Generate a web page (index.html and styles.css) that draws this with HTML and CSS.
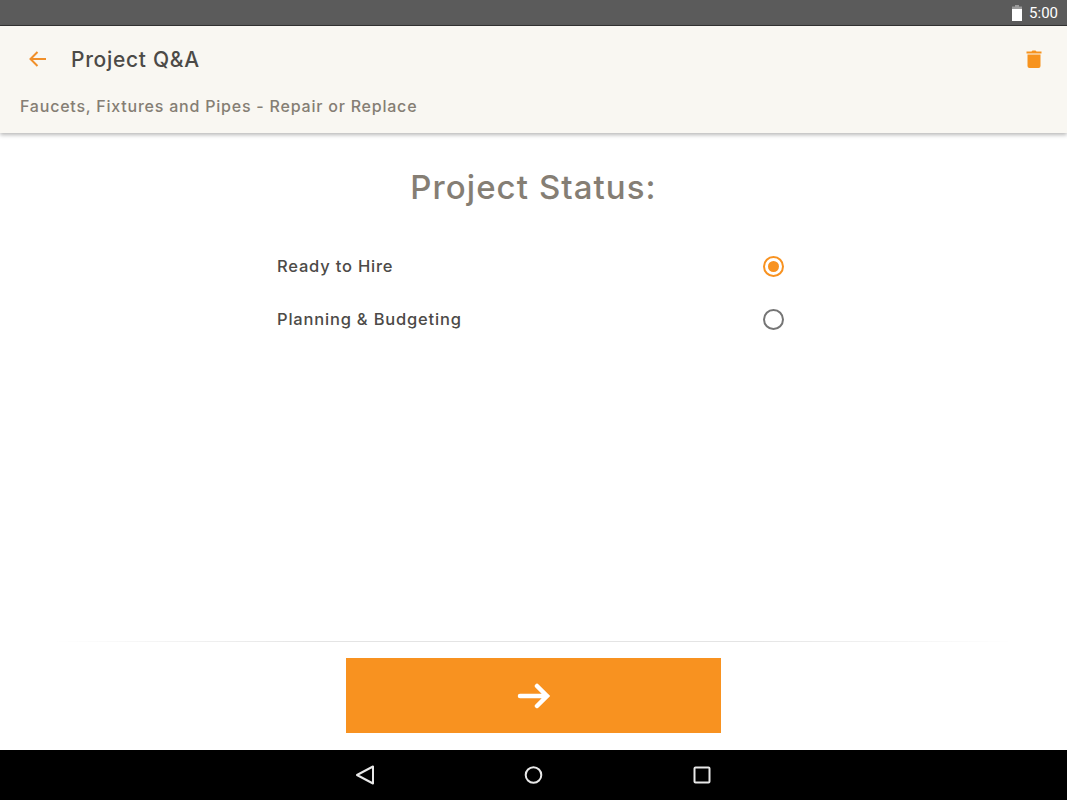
FILE: index.html
```html
<!DOCTYPE html>
<html lang="en">
<head>
    <meta charset="UTF-8">
    <meta name="viewport" content="width=device-width, initial-scale=1.0">
    <title>Project Q&amp;A</title>
    <link rel="stylesheet" href="styles.css">
</head>
<body>
    <div class="screen">
        <div class="status-bar">
            <svg class="battery" width="12" height="16" viewBox="0 0 12 16">
                <path d="M4 0h4v1.500h3v14.500h-10v-14.500h3z" fill="#9a9a9a"/>
                <path d="M1 4h10v12h-10z" fill="#fff"/>
            </svg>
            <span class="clock">5:00</span>
        </div>

        <header class="app-header">
            <div class="toolbar">
                <svg class="back-icon" width="20" height="18" viewBox="0 0 20 18">
                    <path d="M18 9H2.500M9.500 2L2.500 9l7 7" fill="none" stroke="#f08f2a" stroke-width="2"/>
                </svg>
                <h1>Project Q&amp;A</h1>
                <svg class="trash-icon" width="16" height="20" viewBox="0 0 16 20">
                    <path d="M0.500 2.500h5l1-1h3l1 1h5v2h-15z" fill="#f7931e"/>
                    <path d="M1.500 5.500h13v11.500a2 2 0 0 1-2 2h-9a2 2 0 0 1-2-2z" fill="#f7931e"/>
                </svg>
            </div>
            <p class="subtitle">Faucets, Fixtures and Pipes - Repair or Replace</p>
        </header>

        <main class="content">
            <h2>Project Status:</h2>
            <div class="options">
                <div class="option">
                    <span>Ready to Hire</span>
                    <span class="radio checked"></span>
                </div>
                <div class="option">
                    <span>Planning &amp; Budgeting</span>
                    <span class="radio"></span>
                </div>
            </div>
        </main>

        <footer class="actions">
            <div class="divider"></div>
            <button class="next-btn" type="button">
                <svg width="34" height="26" viewBox="0 0 34 26">
                    <path d="M3 13h27M20 3l10 10-10 10" fill="none" stroke="#fff" stroke-width="4.500" stroke-linecap="round"/>
                </svg>
            </button>
        </footer>

        <nav class="nav-bar">
            <svg width="20" height="22" viewBox="0 0 20 22">
                <path d="M18 2.500v17L2 11z" fill="none" stroke="#e8e8e8" stroke-width="2" stroke-linejoin="round"/>
            </svg>
            <svg width="20" height="20" viewBox="0 0 20 20">
                <circle cx="9.500" cy="10" r="7.800" fill="none" stroke="#e8e8e8" stroke-width="2"/>
            </svg>
            <svg width="18" height="18" viewBox="0 0 18 18">
                <rect x="1.500" y="1.500" width="15" height="15" rx="1" fill="none" stroke="#e8e8e8" stroke-width="2"/>
            </svg>
        </nav>
    </div>
</body>
</html>
```

FILE: styles.css
```css
:root {
    --orange: #f89220;
    --dark-text: #4c4a47;
    --muted-text: #857e74;
    --header-bg: #f9f7f2;
}

* {
    margin: 0;
    padding: 0;
    box-sizing: border-box;
}

body {
    font-family: Inter, 'Noto Sans', sans-serif;
    background-color: white;
}

.screen {
    display: flex;
    flex-direction: column;
    width: 1067px;
    height: 800px;
    overflow: hidden;
}

.status-bar {
    display: flex;
    align-items: center;
    justify-content: flex-end;
    gap: 6px;
    height: 26px;
    padding: 0 9px 0 0;
    background-color: #5b5b5b;
    border-bottom: 1px solid #333;
}

.clock {
    margin-top: 1px;
    color: white;
    font-family: Roboto, sans-serif;
    font-size: 15px;
}

.app-header {
    position: relative;
    height: 107px;
    background-color: var(--header-bg);
    box-shadow: 0 2px 4px rgba(0,0,0,0.28);
}

.toolbar {
    display: flex;
    align-items: center;
    height: 66px;
    padding: 0 25px 0 28px;
}

.back-icon {
    margin-right: 23px;
}

h1 {
    flex: 1;
    font-size: 21px;
    font-weight: 500;
    letter-spacing: 0.7px;
    color: var(--dark-text);
}

.subtitle {
    padding: 4px 20px 0;
    font-size: 16px;
    font-weight: 500;
    letter-spacing: 0.78px;
    color: var(--muted-text);
}

.content {
    flex: 1;
    padding-top: 34px;
}

h2 {
    text-align: center;
    font-size: 33px;
    font-weight: 500;
    line-height: 41px;
    letter-spacing: 1.07px;
    color: var(--muted-text);
}

.options {
    width: 507px;
    margin: 32px 0 0 277px;
}

.option {
    display: flex;
    align-items: center;
    justify-content: space-between;
    height: 53px;
    font-size: 16.500px;
    font-weight: 500;
    letter-spacing: 0.8px;
    line-height: 20px;
    color: var(--dark-text);
}

.option span:first-child {
    margin-top: -1px;
}

.radio {
    display: flex;
    align-items: center;
    justify-content: center;
    width: 21px;
    height: 21px;
    border: 2px solid #757575;
    border-radius: 50%;
}

.radio.checked {
    border-color: var(--orange);
}

.radio.checked::after {
    content: '';
    width: 11px;
    height: 11px;
    border-radius: 50%;
    background-color: var(--orange);
}

.actions {
    display: flex;
    flex-direction: column;
    align-items: center;
    height: 109px;
}

.divider {
    width: 100%;
    height: 1px;
    margin-bottom: 16px;
    background: linear-gradient(to right, white 5%, #e4e4e4 30%, #e4e4e4 70%, white 95%);
}

.next-btn {
    display: flex;
    align-items: center;
    justify-content: center;
    width: 375px;
    height: 75px;
    border: none;
    background-color: var(--orange);
}

.nav-bar {
    display: flex;
    align-items: center;
    justify-content: center;
    gap: 149px;
    height: 50px;
    padding-right: 2px;
    background-color: black;
}
```
